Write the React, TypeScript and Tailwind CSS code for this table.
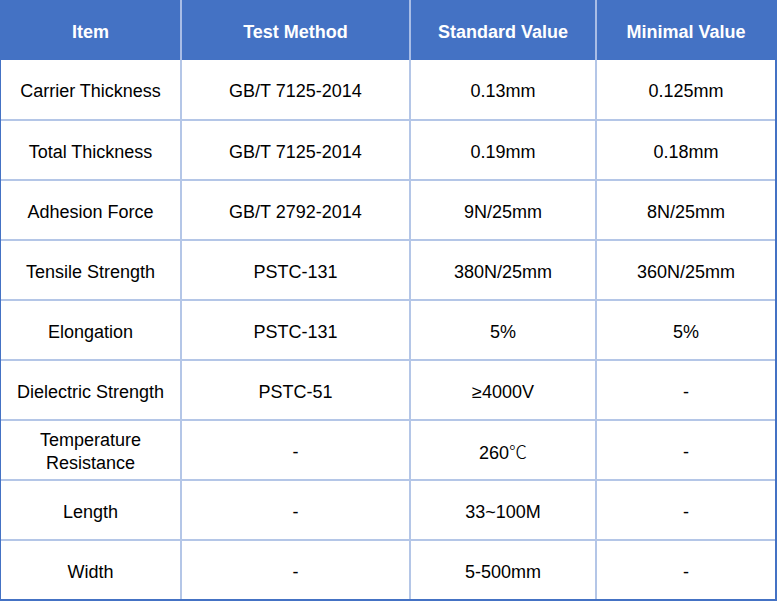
import React from "react";

const ROWS: string[][] = [
  ["Carrier Thickness", "GB/T 7125-2014", "0.13mm", "0.125mm"],
  ["Total Thickness", "GB/T 7125-2014", "0.19mm", "0.18mm"],
  ["Adhesion Force", "GB/T 2792-2014", "9N/25mm", "8N/25mm"],
  ["Tensile Strength", "PSTC-131", "380N/25mm", "360N/25mm"],
  ["Elongation", "PSTC-131", "5%", "5%"],
  ["Dielectric Strength", "PSTC-51", "≥4000V", "-"],
  ["Temperature Resistance", "-", "260℃", "-"],
  ["Length", "-", "33~100M", "-"],
  ["Width", "-", "5-500mm", "-"],
];

const HEAD = ["Item", "Test Method", "Standard Value", "Minimal Value"];
const COLS = "grid-cols-[181px_229px_186px_178px]";

function Cell({ text }: { text: string }) {
  if (text === "Temperature Resistance") {
    return (
      <span>
        Temperature
        <br />
        Resistance
      </span>
    );
  }
  if (text.endsWith("℃")) {
    return (
      <span>
        {text.slice(0, -1)}
        <span className="font-light" style={{ fontFamily: '"Noto Sans CJK SC", sans-serif' }}>
          ℃
        </span>
      </span>
    );
  }
  return <>{text}</>;
}

export default function App() {
  return (
    <div
      className="w-[777px] h-[601px] bg-white text-black text-[18px]"
      style={{ fontFamily: '"Liberation Sans", Arial, "Noto Sans CJK SC", sans-serif' }}
    >
      <div className="border-l border-r-2 border-b-2 border-[#4472c4]">
        {/* header */}
        <div className={`grid ${COLS} h-[60px] bg-[#4472c4] text-white font-bold`}>
          {HEAD.map((h, i) => (
            <div
              key={h}
              className={`flex items-center justify-center pt-1 ${i < 3 ? "border-r-2 border-[#a9bde6]" : ""}`}
            >
              {h}
            </div>
          ))}
        </div>

        {ROWS.map((row, r) => (
          <div
            key={r}
            className={`grid ${COLS} ${
              r === 0
                ? "h-[61px] border-b-2 border-[#b4c6e7]"
                : r < ROWS.length - 1
                ? "h-[60px] border-b-2 border-[#b4c6e7]"
                : "h-[58px]"
            }`}
          >
            {row.map((cell, i) => (
              <div
                key={i}
                className={`flex items-center justify-center text-center leading-[23px] px-1 pt-1 ${
                  i < 3 ? "border-r-2 border-[#b4c6e7]" : ""
                }`}
              >
                <Cell text={cell} />
              </div>
            ))}
          </div>
        ))}
      </div>
    </div>
  );
}
